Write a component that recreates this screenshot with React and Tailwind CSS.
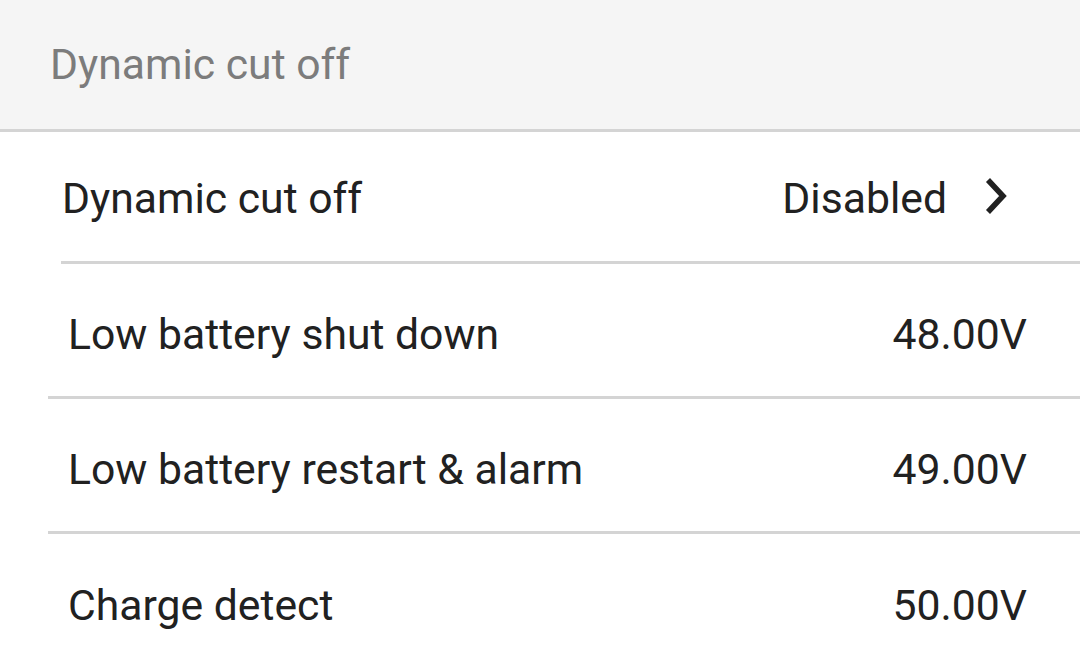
import React from "react";

const font = { fontFamily: "Roboto, 'Noto Sans', sans-serif" };

function ValueRow({ label, value, last }) {
  return (
    <div
      className={`ml-[48px] h-[135px] flex items-center justify-between pl-[20px] pr-[53px] ${last ? "" : "border-b-[3px] border-[#d4d4d4]"}`}
    >
      <span className="text-[42.7px] text-[#212121] leading-none pt-[8px]">{label}</span>
      <span className="text-[42.7px] text-[#212121] leading-none pt-[8px]">{value}</span>
    </div>
  );
}

export default function App() {
  return (
    <div className="w-[1080px] h-[657px] overflow-hidden bg-white" style={font}>
      <div className="h-[132px] bg-[#f5f5f5] border-b-[3px] border-[#d4d4d4] flex items-center pl-[50px]">
        <span className="text-[42.7px] text-[#7c7c7c] leading-none">Dynamic cut off</span>
      </div>
      <div className="ml-[61px] h-[132px] flex items-center justify-between pl-[1px] pr-[72px] border-b-[3px] border-[#d4d4d4]">
        <span className="text-[42.7px] text-[#212121] leading-none pt-[3px]">Dynamic cut off</span>
        <div className="flex items-center gap-[37px]">
          <span className="text-[42.7px] text-[#212121] leading-none pt-[3px]">Disabled</span>
          <svg width="24" height="38" viewBox="0 0 24 38" className="block">
            <path d="M4 3 L19 19 L4 35" fill="none" stroke="#212121" strokeWidth="5.5" strokeLinecap="butt" strokeLinejoin="miter" />
          </svg>
        </div>
      </div>
      <ValueRow label="Low battery shut down" value="48.00V" />
      <ValueRow label="Low battery restart & alarm" value="49.00V" />
      <ValueRow label="Charge detect" value="50.00V" last />
    </div>
  );
}
